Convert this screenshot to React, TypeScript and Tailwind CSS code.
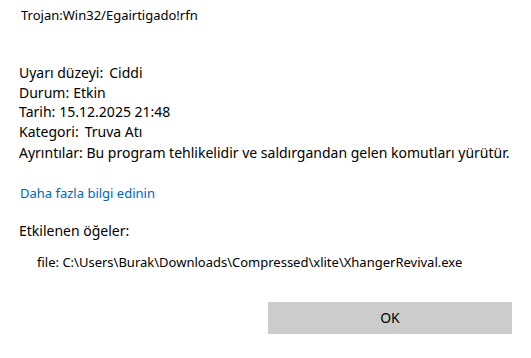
export default function App() {
  const rows = [
    { label: "Uyarı düzeyi:", value: "Ciddi", gap: "ml-[6px]" },
    { label: "Durum:", value: "Etkin", gap: "ml-[4px]" },
    { label: "Tarih:", value: "15.12.2025 21:48", gap: "ml-[4px]" },
    { label: "Kategori:", value: "Truva Atı", gap: "ml-[6px]" },
  ];

  return (
    <div className="w-[531px] h-[358px] bg-white text-black font-['Segoe_UI','Noto_Sans',sans-serif] overflow-hidden">
      <div className="pl-[21px] pt-[6px] text-[13px] leading-[18px]">
        Trojan:Win32/Egairtigado!rfn
      </div>

      <div className="pl-[19px] mt-[39px] text-[14px] leading-[19.5px] whitespace-nowrap">
        {rows.map((r) => (
          <div key={r.label}>
            {r.label}
            <span className={r.gap}>{r.value}</span>
          </div>
        ))}
        <div className="mt-[2px]">
          Ayrıntılar: Bu program tehlikelidir ve saldırgandan gelen komutları yürütür.
        </div>
      </div>

      <div className="pl-[20px] mt-[21px] text-[13px] leading-[18px] text-[#0067c0]">
        Daha fazla bilgi edinin
      </div>

      <div className="pl-[19px] mt-[19px] text-[14px] leading-[20px]">
        Etkilenen öğeler:
      </div>

      <div className="pl-[37px] mt-[12px] text-[13px] leading-[18px] whitespace-nowrap">
        file: C:\Users\Burak\Downloads\Compressed\xlite\XhangerRevival.exe
      </div>

      <div className="flex justify-end pr-[19px] mt-[31px]">
        <button className="w-[244px] h-[32px] bg-[#cccccc] text-[14px] text-black">
          OK
        </button>
      </div>
    </div>
  );
}
